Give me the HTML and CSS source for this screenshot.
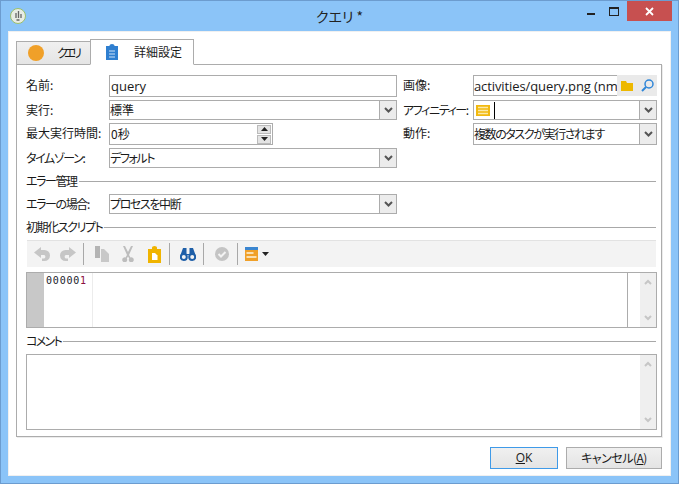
FILE: index.html
```html
<!DOCTYPE html>
<html lang="ja">
<head>
  <meta charset="UTF-8" />
  <title>クエリ *</title>
  <link rel="stylesheet" href="styles.css">
</head>
<body>
  <div class="window">
    <div class="titlebar">
      <svg class="app-icon" width="16" height="16" viewBox="0 0 16 16">
        <circle cx="8" cy="8" r="7.500" fill="#e8ece4" stroke="#9cc06a" stroke-width="1"/>
        <path d="M8.500 3v7M6 5v5M11 6v4M6.500 12h3" stroke="#666" stroke-width="1.300" fill="none"/>
      </svg>
      <span class="title">クエリ *</span>
      <div class="win-buttons">
        <span class="win-min"></span>
        <span class="win-max"></span>
        <span class="win-close">
          <svg width="9" height="9" viewBox="0 0 9 9"><path d="M1 1l7 7M8 1l-7 7" stroke="#fff" stroke-width="1.800"/></svg>
        </span>
      </div>
    </div>

    <div class="client">
      <div class="tabs">
        <div class="tab">
          <svg width="16" height="16" viewBox="0 0 16 16"><circle cx="8" cy="8" r="8" fill="#f0a029"/></svg>
          <span class="tab-kana">クエリ</span>
        </div>
        <div class="tab active">
          <svg width="12" height="16" viewBox="0 0 12 16">
            <path d="M0 2h3.500V1.500a2.500 1.500 0 0 1 5 0V2H12v14H0z" fill="#2f7fd0"/>
            <path d="M3 7h6M3 10h6M3 13h6" stroke="#cfe3f7" stroke-width="1"/>
          </svg>
          <span>詳細設定</span>
        </div>
      </div>

      <div class="pane">
        <div class="form-grid">
          <label>名前:</label>
          <div class="field"><span class="value latin">query</span></div>
          <label>画像:</label>
          <div class="field image-field">
            <span class="value latin">activities/query.png (nm</span>
            <div class="image-btns">
              <svg width="12" height="10" viewBox="0 0 12 10"><path d="M0 0h5l1 2h6v8H0z" fill="#edb800"/></svg>
              <svg width="13" height="13" viewBox="0 0 13 13"><circle cx="8" cy="5" r="4" fill="none" stroke="#2f86d8" stroke-width="1.500"/><path d="M5 8l-4 4" stroke="#2f86d8" stroke-width="2"/></svg>
            </div>
          </div>

          <label>実行:</label>
          <div class="field"><span class="value">標準</span><span class="drop"><svg width="9" height="7" viewBox="0 0 9 7"><path d="M1 1l3.500 3.500L8 1" fill="none" stroke="#555" stroke-width="2"/></svg></span></div>
          <label class="tight">アフィニティー:</label>
          <div class="field">
            <svg class="affinity" width="14" height="11" viewBox="0 0 14 11">
              <rect width="14" height="11" fill="#f2b90f"/>
              <path d="M2 2.500h10M2 5.500h10M2 8.500h10" stroke="#fbe9a8" stroke-width="1.300"/>
            </svg>
            <span class="caret"></span>
            <span class="value"></span>
            <span class="drop"><svg width="9" height="7" viewBox="0 0 9 7"><path d="M1 1l3.500 3.500L8 1" fill="none" stroke="#555" stroke-width="2"/></svg></span>
          </div>

          <label>最大実行時間:</label>
          <div class="field spin-field">
            <span class="value num">0秒</span>
            <div class="spin">
              <span><svg width="7" height="4" viewBox="0 0 7 4"><path d="M3.500 0L7 4H0z" fill="#222"/></svg></span>
              <span><svg width="7" height="4" viewBox="0 0 7 4"><path d="M0 0h7L3.500 4z" fill="#222"/></svg></span>
            </div>
          </div>
          <label>動作:</label>
          <div class="field short"><span class="value tight">複数のタスクが実行されます</span><span class="drop"><svg width="9" height="7" viewBox="0 0 9 7"><path d="M1 1l3.500 3.500L8 1" fill="none" stroke="#555" stroke-width="2"/></svg></span></div>

          <label class="tight">タイムゾーン:</label>
          <div class="field"><span class="value tight">デフォルト</span><span class="drop"><svg width="9" height="7" viewBox="0 0 9 7"><path d="M1 1l3.500 3.500L8 1" fill="none" stroke="#555" stroke-width="2"/></svg></span></div>
        </div>

        <div class="section first"><span class="tight">エラー管理</span><i></i></div>
        <div class="error-row">
          <label class="tight">エラーの場合:</label>
          <div class="field"><span class="value tight">プロセスを中断</span><span class="drop"><svg width="9" height="7" viewBox="0 0 9 7"><path d="M1 1l3.500 3.500L8 1" fill="none" stroke="#555" stroke-width="2"/></svg></span></div>
        </div>

        <div class="section"><span class="tight">初期化スクリプト</span><i></i></div>
        <div class="toolbar">
          <svg class="ml7" width="16" height="14" viewBox="0 0 16 14"><path d="M7 0L0 5.500 7 11V8h3a1.800 1.800 0 0 1 0 3.500H8V14h2.500a4.500 4.500 0 0 0 0-11H7z" fill="#c6c6c6"/></svg>
          <svg class="ml10" width="16" height="14" viewBox="0 0 16 14"><path d="M9 0l7 5.500L9 11V8H6a1.800 1.800 0 0 0 0 3.500h2V14H5.500a4.500 4.500 0 0 1 0-11H9z" fill="#c6c6c6"/></svg>
          <span class="sep ml7"></span>
          <svg class="ml11" width="14" height="16" viewBox="0 0 14 16"><path d="M0 0h5v12H0z" fill="#b4b4b4"/><path d="M6 3h3l5 5v8H6z" fill="#c8c8c8"/></svg>
          <svg class="ml12" width="14" height="16" viewBox="0 0 14 16"><path d="M2 0h2l3 6 3-6h2L8 9l1.500 2.500a2.500 2.500 0 1 1-1.300 1L7 10.500l-1.200 2a2.500 2.500 0 1 1-1.300-1L6 9z" fill="#bdbdbd"/></svg>
          <svg class="ml13" width="13" height="17" viewBox="0 0 13 17"><path d="M0 3h4V1.500a2.500 1.500 0 0 1 5 0V3h4v14H0z" fill="#f0b400"/><path d="M4 7h3l2.500 2.500V14H4z" fill="#fff"/></svg>
          <span class="sep ml8"></span>
          <svg class="ml10" width="16" height="13" viewBox="0 0 16 13"><circle cx="3.800" cy="9" r="3" fill="none" stroke="#1f5fa8" stroke-width="2"/><circle cx="12.200" cy="9" r="3" fill="none" stroke="#1f5fa8" stroke-width="2"/><path d="M3 0h3.500v6h3V0H13l2.500 7H.500z" fill="#1f5fa8"/></svg>
          <span class="sep ml7"></span>
          <svg class="ml11" width="14" height="14" viewBox="0 0 14 14"><circle cx="7" cy="7" r="7" fill="#c4c4c4"/><path d="M3.500 7l2.500 2.500 4.500-4.500" fill="none" stroke="#f3f3f3" stroke-width="2"/></svg>
          <span class="sep ml8"></span>
          <svg class="ml7" width="13" height="14" viewBox="0 0 13 14"><path d="M0 0h13v3H0z" fill="#3b86d0"/><path d="M0 3h13v11H0z" fill="#f0a029"/><path d="M1.500 6h7M1.500 10h10" stroke="#fdf3df" stroke-width="1.500"/></svg>
          <svg class="ml4" width="7" height="4" viewBox="0 0 7 4"><path d="M0 0h7L3.500 4z" fill="#222"/></svg>
        </div>

        <div class="editor">
          <div class="gutter"></div>
          <div class="lines">00000<b>1</b></div>
          <div class="code"></div>
          <div class="scrollbar">
            <svg width="8" height="6" viewBox="0 0 8 6"><path d="M1 5l3-3 3 3" fill="none" stroke="#c6c6c6" stroke-width="2"/></svg>
            <svg width="8" height="6" viewBox="0 0 8 6"><path d="M1 1l3 3 3-3" fill="none" stroke="#c6c6c6" stroke-width="2"/></svg>
          </div>
        </div>

        <div class="section comment"><span class="tightest">コメント</span><i></i></div>
        <div class="comment-box">
          <div class="scrollbar">
            <svg width="8" height="6" viewBox="0 0 8 6"><path d="M1 5l3-3 3 3" fill="none" stroke="#c6c6c6" stroke-width="2"/></svg>
            <svg width="8" height="6" viewBox="0 0 8 6"><path d="M1 1l3 3 3-3" fill="none" stroke="#c6c6c6" stroke-width="2"/></svg>
          </div>
        </div>
      </div>

      <div class="actions">
        <button class="ok"><u>O</u>K</button>
        <button class="cancel">キャンセル(<u>A</u>)</button>
      </div>
    </div>
  </div>
</body>
</html>
```

FILE: styles.css
```css
html, body {
  margin: 0;
  background: white;
}
body {
  font-family: "Noto Sans CJK JP", "Noto Sans", sans-serif;
  font-size: 12px;
  font-feature-settings: "palt";
  color: #1a1a1a;
}
.tight { letter-spacing: -1.400px; }
.tightest { letter-spacing: -1.700px; }
.tab-kana { letter-spacing: -3.600px; }
.window {
  width: 679px;
  height: 484px;
  box-sizing: border-box;
  border: 1px solid #6c9ccf;
  background: #8bc4f8;
  display: flex;
  flex-direction: column;
}
.titlebar {
  height: 30px;
  flex: none;
  display: flex;
  padding-left: 9px;
  position: relative;
}
.app-icon {
  margin-top: 7px;
}
.title {
  position: absolute;
  left: 0;
  right: 0;
  top: 6px;
  text-align: center;
  font-size: 14px;
  line-height: 18px;
  color: #222;
}
.win-buttons {
  margin-left: auto;
  margin-right: 6px;
  display: flex;
  height: 20px;
}
.win-min {
  width: 8px;
  height: 2px;
  background: #222;
  margin: 12px 14px 0 0;
}
.win-max {
  width: 8px;
  height: 6px;
  border: 1px solid #222;
  border-top-width: 2px;
  margin: 6px 0 0 0;
}
.win-close {
  width: 45px;
  margin-left: 8px;
  background: #c75050;
  display: flex;
  align-items: center;
  justify-content: center;
}
.client {
  flex: 1;
  margin: 0 7px 7px;
  background: white;
  border: 1px solid #f0f0f0;
  padding: 7px 8px 0 7px;
  display: flex;
  flex-direction: column;
  min-height: 0;
}
.tabs {
  display: flex;
  align-items: flex-end;
  height: 26px;
  flex: none;
  margin-bottom: -1px;
  position: relative;
}
.tab {
  height: 24px;
  box-sizing: border-box;
  width: 75px;
  border: 1px solid #acacac;
  background: linear-gradient(#f0f0f0, #e5e5e5);
  display: flex;
  align-items: center;
  padding: 0 0 1px 11px;
  gap: 13px;
  white-space: nowrap;
}
.tab svg {
  flex: none;
}
.tab.active {
  height: 26px;
  width: 104px;
  margin-left: -1px;
  background: white;
  border-bottom-color: white;
  padding-left: 15px;
  gap: 16px;
}
.pane {
  flex: none;
  height: 373px;
  box-sizing: border-box;
  border: 1px solid #acacac;
  padding: 10px 4px 6px 9px;
  background: white;
  box-shadow: 1px 1px 0 #ececec;
}
.form-grid {
  display: grid;
  grid-template-columns: 83px 288px 76px 184px;
  grid-template-rows: 22px 20px 22px 20px;
  row-gap: 3px;
}
.form-grid label:nth-of-type(even) {
  margin-left: 6px;
}
label {
  line-height: 19px;
  white-space: nowrap;
}
.field {
  border: 1px solid #acacac;
  box-sizing: border-box;
  display: flex;
  align-items: center;
  background: white;
  min-width: 0;
}
.value {
  flex: 1;
  min-width: 0;
  white-space: nowrap;
  overflow: hidden;
  line-height: 18px;
}
.latin,
.num {
  padding-left: 1px;
}
.latin {
  font-family: "Open Sans", sans-serif;
  font-size: 13px;
}
.drop {
  flex: none;
  width: 16px;
  align-self: stretch;
  border-left: 1px solid #acacac;
  background: #ececec;
  display: flex;
  align-items: center;
  justify-content: center;
}
.image-field {
  height: 21px;
}
.image-field .latin {
  padding-left: 0;
  letter-spacing: -0.100px;
}
.image-btns {
  flex: none;
  width: 40px;
  align-self: stretch;
  margin: -1px -1px -1px 0;
  background: #eaeaea;
  display: flex;
  align-items: center;
  gap: 8px;
  padding-left: 4px;
  box-sizing: border-box;
}
.affinity {
  margin-left: 2px;
  flex: none;
}
.caret {
  width: 1px;
  height: 17px;
  background: #000;
  margin-left: 4px;
  flex: none;
}
.spin-field {
  width: 164px;
}
.spin {
  width: 14px;
  margin-right: 1px;
  display: flex;
  flex-direction: column;
  gap: 1px;
}
.spin span {
  height: 7px;
  background: #e4e4e4;
  border: 1px solid #bbb;
  display: flex;
  align-items: center;
  justify-content: center;
}
.section {
  display: flex;
  align-items: center;
  height: 15px;
  margin-top: 6px;
  gap: 2px;
}
.section span {
  line-height: 14px;
  margin-top: -2px;
  white-space: nowrap;
}
.section i {
  flex: 1;
  border-top: 1px solid #a8a8a8;
  margin-right: 1px;
}
.error-row {
  display: grid;
  grid-template-columns: 83px 288px;
  grid-template-rows: 20px;
  margin-top: 5px;
}
.toolbar {
  height: 27px;
  box-sizing: border-box;
  margin: 5px 1px 0 1px;
  background: #f3f3f3;
  border-top: 1px solid #e2e2e2;
  display: flex;
  align-items: center;
}
.ml4 { margin-left: 4px; }
.ml7 { margin-left: 7px; }
.ml8 { margin-left: 8px; }
.ml10 { margin-left: 10px; }
.ml11 { margin-left: 11px; }
.ml12 { margin-left: 12px; }
.ml13 { margin-left: 13px; }
.sep {
  width: 1px;
  height: 22px;
  background: #a8a8a8;
}
.editor {
  height: 56px;
  box-sizing: border-box;
  margin-top: 5px;
  border: 1px solid #acacac;
  display: flex;
}
.gutter {
  width: 17px;
  background: #c8c8c8;
}
.lines {
  width: 49px;
  box-sizing: border-box;
  padding-left: 2px;
  border-right: 1px solid #ececec;
  font-family: "DejaVu Sans Mono", monospace;
  font-size: 10px;
  line-height: 15px;
  letter-spacing: 0.800px;
  color: #1a1a2a;
}
.lines b {
  font-weight: normal;
  color: #8a1040;
}
.code {
  flex: 1;
  border-right: 1px solid #acacac;
}
.scrollbar {
  width: 16px;
  margin-left: 12px;
  background: #efefef;
  display: flex;
  flex-direction: column;
  align-items: center;
  justify-content: space-between;
  padding: 6px 0;
  box-sizing: border-box;
}
.comment {
  margin-top: 6px;
}
.comment-box {
  height: 76px;
  box-sizing: border-box;
  margin-top: 5px;
  border: 1px solid #acacac;
  display: flex;
  justify-content: flex-end;
}
.actions {
  display: flex;
  justify-content: flex-end;
  gap: 8px;
  margin-top: 10px;
}
button {
  height: 22px;
  padding: 0;
  font-family: inherit;
  font-size: 12px;
  font-feature-settings: "palt";
  color: #1a1a1a;
  background: linear-gradient(#f0f0f0, #e4e4e4);
  border: 1px solid #acacac;
  line-height: 18px;
}
.ok {
  width: 68px;
  border-color: #3f9ae8;
  font-family: "Open Sans", sans-serif;
}
.cancel {
  width: 96px;
  letter-spacing: -0.500px;
}
```
